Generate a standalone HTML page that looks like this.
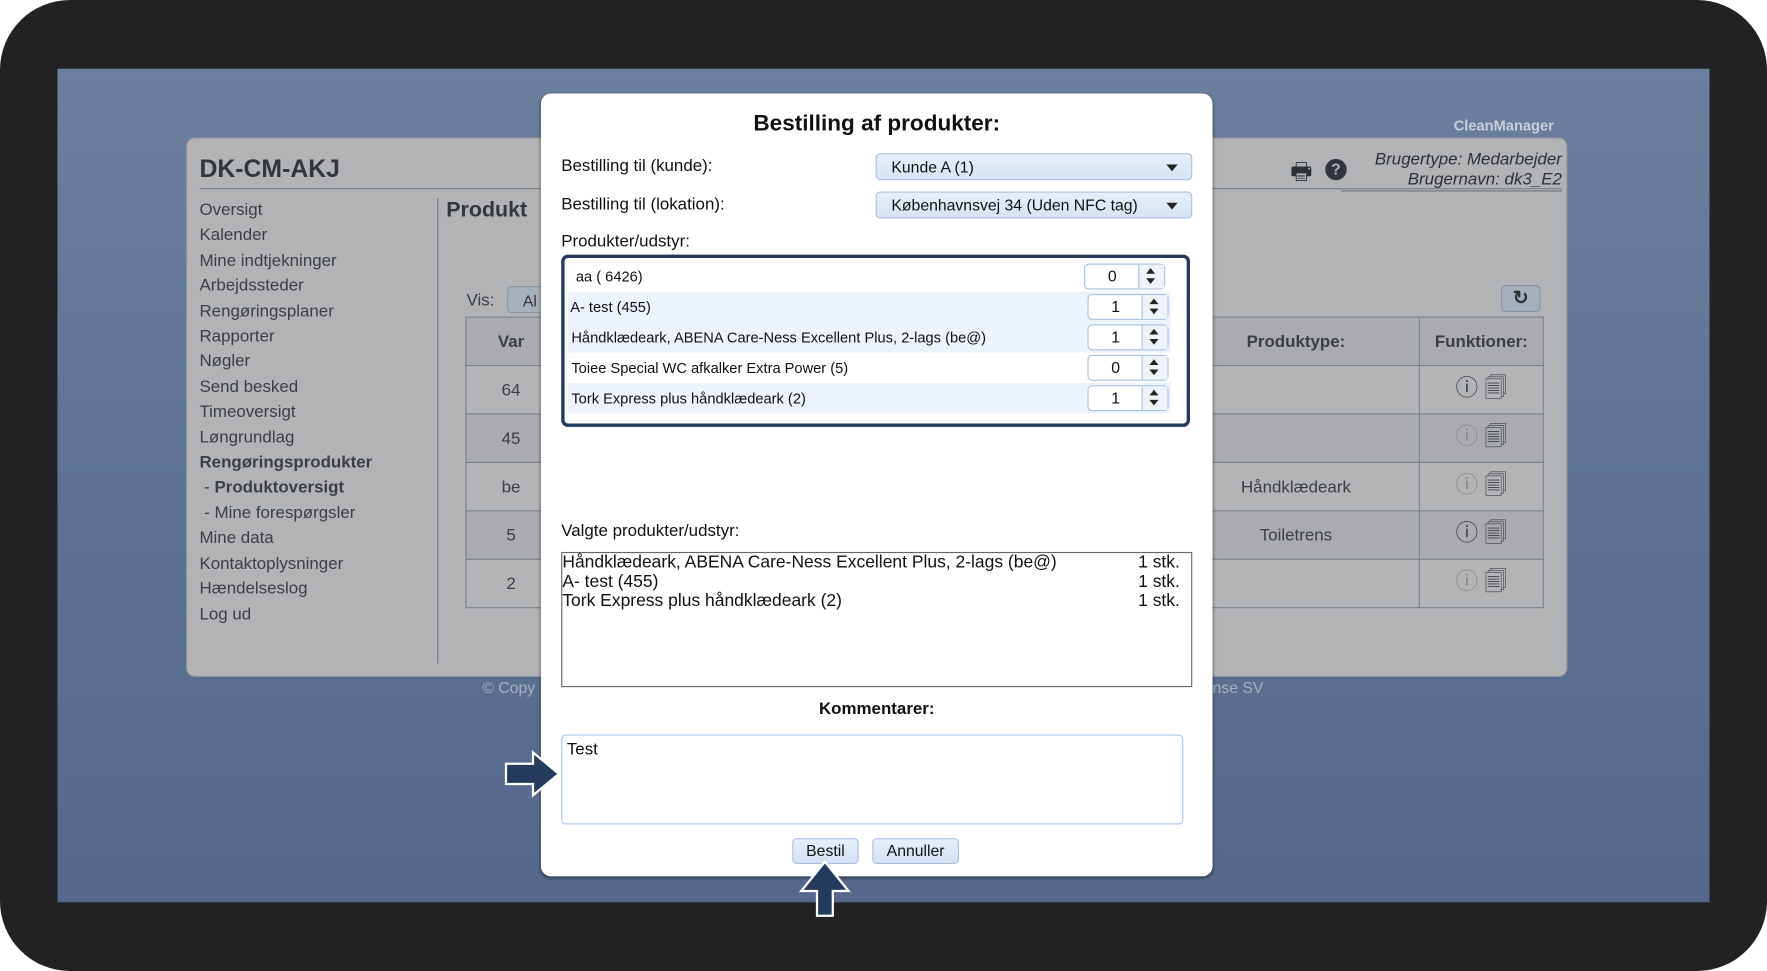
<!DOCTYPE html>
<html><head><meta charset="utf-8"><style>
html,body{margin:0;padding:0;width:1767px;height:971px;overflow:hidden;background:#fff}
#w{position:absolute;left:0;top:0;width:1568px;height:862px;transform:scale(1.12691,1.12645);transform-origin:0 0;font-family:"Liberation Sans",sans-serif}
.a{position:absolute}
#frame{left:0;top:0;width:1568px;height:862px;background:#222224;border-radius:62px}
#scr{left:51px;top:61px;width:1466px;height:740px;background:linear-gradient(180deg,#6b7f9e 0%,#5e7394 50%,#55688b 100%)}
#panel{left:165px;top:122px;width:1226px;height:479px;background:#b2b3b5;border-radius:8px;border:1px solid #8d939c;box-sizing:border-box}
.nav{left:177px;font-size:15px;color:#3b3e44;line-height:22.4px}
.t{color:#3b3e44}
table.bg{position:absolute;border-collapse:collapse;font-size:15px;color:#3b3e44;table-layout:fixed}
table.bg td{border:1px solid #7d828a;height:43px;padding:0;text-align:center;box-sizing:border-box}
table.bg td.ic{font-size:20px}
#modal{left:480px;top:83px;width:596px;height:695px;background:#fff;border-radius:9px;box-shadow:0 1px 3px rgba(0,0,0,.5)}
.m{color:#111;font-size:15px}
.sel{background:linear-gradient(#e6eef9,#d7e3f3);border:1px solid #a6bfdf;border-radius:4px;box-sizing:border-box;font-size:14px;color:#111;padding:3px 13px}
.sel:after{content:"";position:absolute;right:12px;top:9px;border:5px solid transparent;border-top:6px solid #222;}
.row{position:absolute;left:3px;width:535px;height:27px;font-size:13px;color:#111;line-height:27px}
.sp{position:absolute;left:461px;top:2px;width:72px;height:23px;border:1px solid #a9c1e1;border-radius:4px;background:#fff;box-sizing:border-box}
.sp span{position:absolute;left:0;width:48px;text-align:center;line-height:21px;font-size:14px}
.sp i{position:absolute;right:0;top:0;width:22px;height:21px;border-left:1px solid #a9c1e1;background:#eef3fa}
.sp i:before{content:"";position:absolute;left:6px;top:3px;border:4px solid transparent;border-bottom:5px solid #222;border-top:0}
.sp i:after{content:"";position:absolute;left:6px;top:12px;border:4px solid transparent;border-top:5px solid #222;border-bottom:0}
.btn{background:linear-gradient(#e7eff9,#d4e1f2);border:1px solid #a7c0e1;border-radius:4px;font-size:14px;color:#111;text-align:center;line-height:21px;box-sizing:border-box;height:23px}
</style></head><body><div id="w">
<div id="frame" class="a"></div>
<div id="scr" class="a"></div>
<div class="a" style="left:1290px;top:104px;font-size:13px;font-weight:bold;color:#c9cfd8">CleanManager</div>
<div id="panel" class="a"></div>
<div class="a" style="left:177px;top:137px;font-size:22px;font-weight:bold;color:#33363c">DK-CM-AKJ</div>
<div class="a" style="left:177px;top:167px;width:1209px;height:1px;background:#7c8088"></div>
<div class="a" style="left:388px;top:176px;width:1px;height:413px;background:#6f737a"></div>
<div class="a nav" style="top:176px">Oversigt<br>Kalender<br>Mine indtjekninger<br>Arbejdssteder<br>Rengøringsplaner<br>Rapporter<br>Nøgler<br>Send besked<br>Timeoversigt<br>Løngrundlag<br><b>Rengøringsprodukter</b><br>&nbsp;- <b>Produktoversigt</b><br>&nbsp;- Mine forespørgsler<br>Mine data<br>Kontaktoplysninger<br>Hændelseslog<br>Log ud</div>
<div class="a" style="left:396px;top:176px;font-size:19px;font-weight:bold;color:#33363c">Produkt</div>
<div class="a t" style="left:414px;top:258px;font-size:15px">Vis:</div>
<div class="a" style="left:450px;top:254px;width:40px;height:24px;background:#a7b1bd;border:1px solid #8994a3;border-radius:4px;font-size:14px;color:#333;line-height:24px;padding-left:13px;box-sizing:border-box">Al</div>
<div class="a" style="left:1145px;top:138px;font-size:21px;color:#2c3036">&#x1F5B6;</div>
<div class="a" style="left:1176px;top:141px;width:19px;height:19px;border-radius:50%;background:#30343c;color:#b2b3b5;font-size:14px;font-weight:bold;text-align:center;line-height:19px">?</div>
<div class="a" style="left:1190px;top:133px;width:196px;text-align:right;font-size:15px;font-style:italic;color:#2c3036;line-height:18px;border-bottom:1px solid #6f737a">Brugertype: Medarbejder<br>Brugernavn: dk3_E2</div>
<div class="a" style="left:1332px;top:253px;width:35px;height:24px;background:#a5afbd;border:1px solid #8893a4;border-radius:4px;box-sizing:border-box;text-align:center;font-size:17px;line-height:22px;color:#2c3036;font-weight:bold">&#x21BB;</div>
<table class="bg" style="left:413px;top:281px;width:956px">
<colgroup><col style="width:80px"><col style="width:547px"><col style="width:219px"><col style="width:110px"></colgroup>
<tr style="background:#a9abae"><td style="height:35px;font-weight:bold">Var</td><td></td><td style="font-weight:bold">Produktype:</td><td style="font-weight:bold">Funktioner:</td></tr>
<tr style="background:#b3b4b6"><td>64</td><td></td><td></td><td class="ic">ⓘ &#x1F5D0;</td></tr>
<tr style="background:#a9abae"><td>45</td><td></td><td></td><td class="ic" style="color:#888">ⓘ <span style="color:#3b3e44">&#x1F5D0;</span></td></tr>
<tr style="background:#b3b4b6"><td>be</td><td></td><td>Håndklædeark</td><td class="ic" style="color:#888">ⓘ <span style="color:#3b3e44">&#x1F5D0;</span></td></tr>
<tr style="background:#a9abae"><td>5</td><td></td><td>Toiletrens</td><td class="ic">ⓘ &#x1F5D0;</td></tr>
<tr style="background:#b3b4b6"><td>2</td><td></td><td></td><td class="ic" style="color:#888">ⓘ <span style="color:#3b3e44">&#x1F5D0;</span></td></tr>
</table>
<div class="a" style="left:428px;top:602px;font-size:14px;color:#a8b0bd">© Copy</div>
<div class="a" style="left:1076px;top:602px;font-size:14px;color:#a8b0bd">nse SV</div>

<div id="modal" class="a"></div>
<div class="a" style="left:480px;top:99px;width:596px;text-align:center;font-size:20px;font-weight:bold;color:#111">Bestilling af produkter:</div>
<div class="a m" style="left:498px;top:139px">Bestilling til (kunde):</div>
<div class="a m" style="left:498px;top:173px">Bestilling til (lokation):</div>
<div class="a sel" style="left:777px;top:136px;width:281px;height:24px">Kunde A (1)</div>
<div class="a sel" style="left:777px;top:170px;width:281px;height:24px">Københavnsvej 34 (Uden NFC tag)</div>
<div class="a m" style="left:498px;top:206px">Produkter/udstyr:</div>
<div class="a" style="left:498px;top:226px;width:558px;height:153px;border:3px solid #243b5c;border-radius:6px;box-sizing:border-box;background:#fff">
<div class="row" style="top:3px;background:#fff;padding-left:7px;box-sizing:border-box">aa ( 6426)<div class="sp" style="left:458px"><span>0</span><i></i></div></div>
<div class="row" style="top:30px;background:#edf3fc;padding-left:2px;box-sizing:border-box">A- test (455)<div class="sp"><span>1</span><i></i></div></div>
<div class="row" style="top:57px;background:#edf3fc;padding-left:3px;box-sizing:border-box">Håndklædeark, ABENA Care-Ness Excellent Plus, 2-lags (be@)<div class="sp"><span>1</span><i></i></div></div>
<div class="row" style="top:84px;background:#fff;padding-left:3px;box-sizing:border-box">Toiee Special WC afkalker Extra Power (5)<div class="sp"><span>0</span><i></i></div></div>
<div class="row" style="top:111px;background:#edf3fc;padding-left:3px;box-sizing:border-box">Tork Express plus håndklædeark (2)<div class="sp"><span>1</span><i></i></div></div>
</div>
<div class="a m" style="left:498px;top:463px">Valgte produkter/udstyr:</div>
<div class="a" style="left:498px;top:490px;width:560px;height:120px;border:1px solid #666;box-sizing:border-box;font-size:15.5px;line-height:17px;color:#111">
<div style="position:relative">Håndklædeark, ABENA Care-Ness Excellent Plus, 2-lags (be@)<span style="position:absolute;right:10px">1 stk.</span></div>
<div style="position:relative">A- test (455)<span style="position:absolute;right:10px">1 stk.</span></div>
<div style="position:relative">Tork Express plus håndklædeark (2)<span style="position:absolute;right:10px">1 stk.</span></div>
</div>
<div class="a" style="left:480px;top:621px;width:596px;text-align:center;font-size:15px;font-weight:bold;color:#111">Kommentarer:</div>
<div class="a" style="left:498px;top:652px;width:552px;height:80px;border:1px solid #a9c4e8;border-radius:4px;box-sizing:border-box;font-size:15px;color:#111;padding:4px 4px">Test</div>
<div class="a btn" style="left:703px;top:744px;width:59px">Bestil</div>
<div class="a btn" style="left:774px;top:744px;width:77px">Annuller</div>
<svg class="a" style="left:440px;top:660px" width="64" height="52"><path d="M9 18 H33 V8 L56 27 L33 46 V36 H9 Z" fill="#243b5c" stroke="#fff" stroke-width="2"/></svg>
<svg class="a" style="left:704px;top:760px" width="56" height="56"><path d="M21 53 V31 H7 L28 5 L49 31 H35 V53 Z" fill="#243b5c" stroke="#fff" stroke-width="2"/></svg>
</div></body></html>
